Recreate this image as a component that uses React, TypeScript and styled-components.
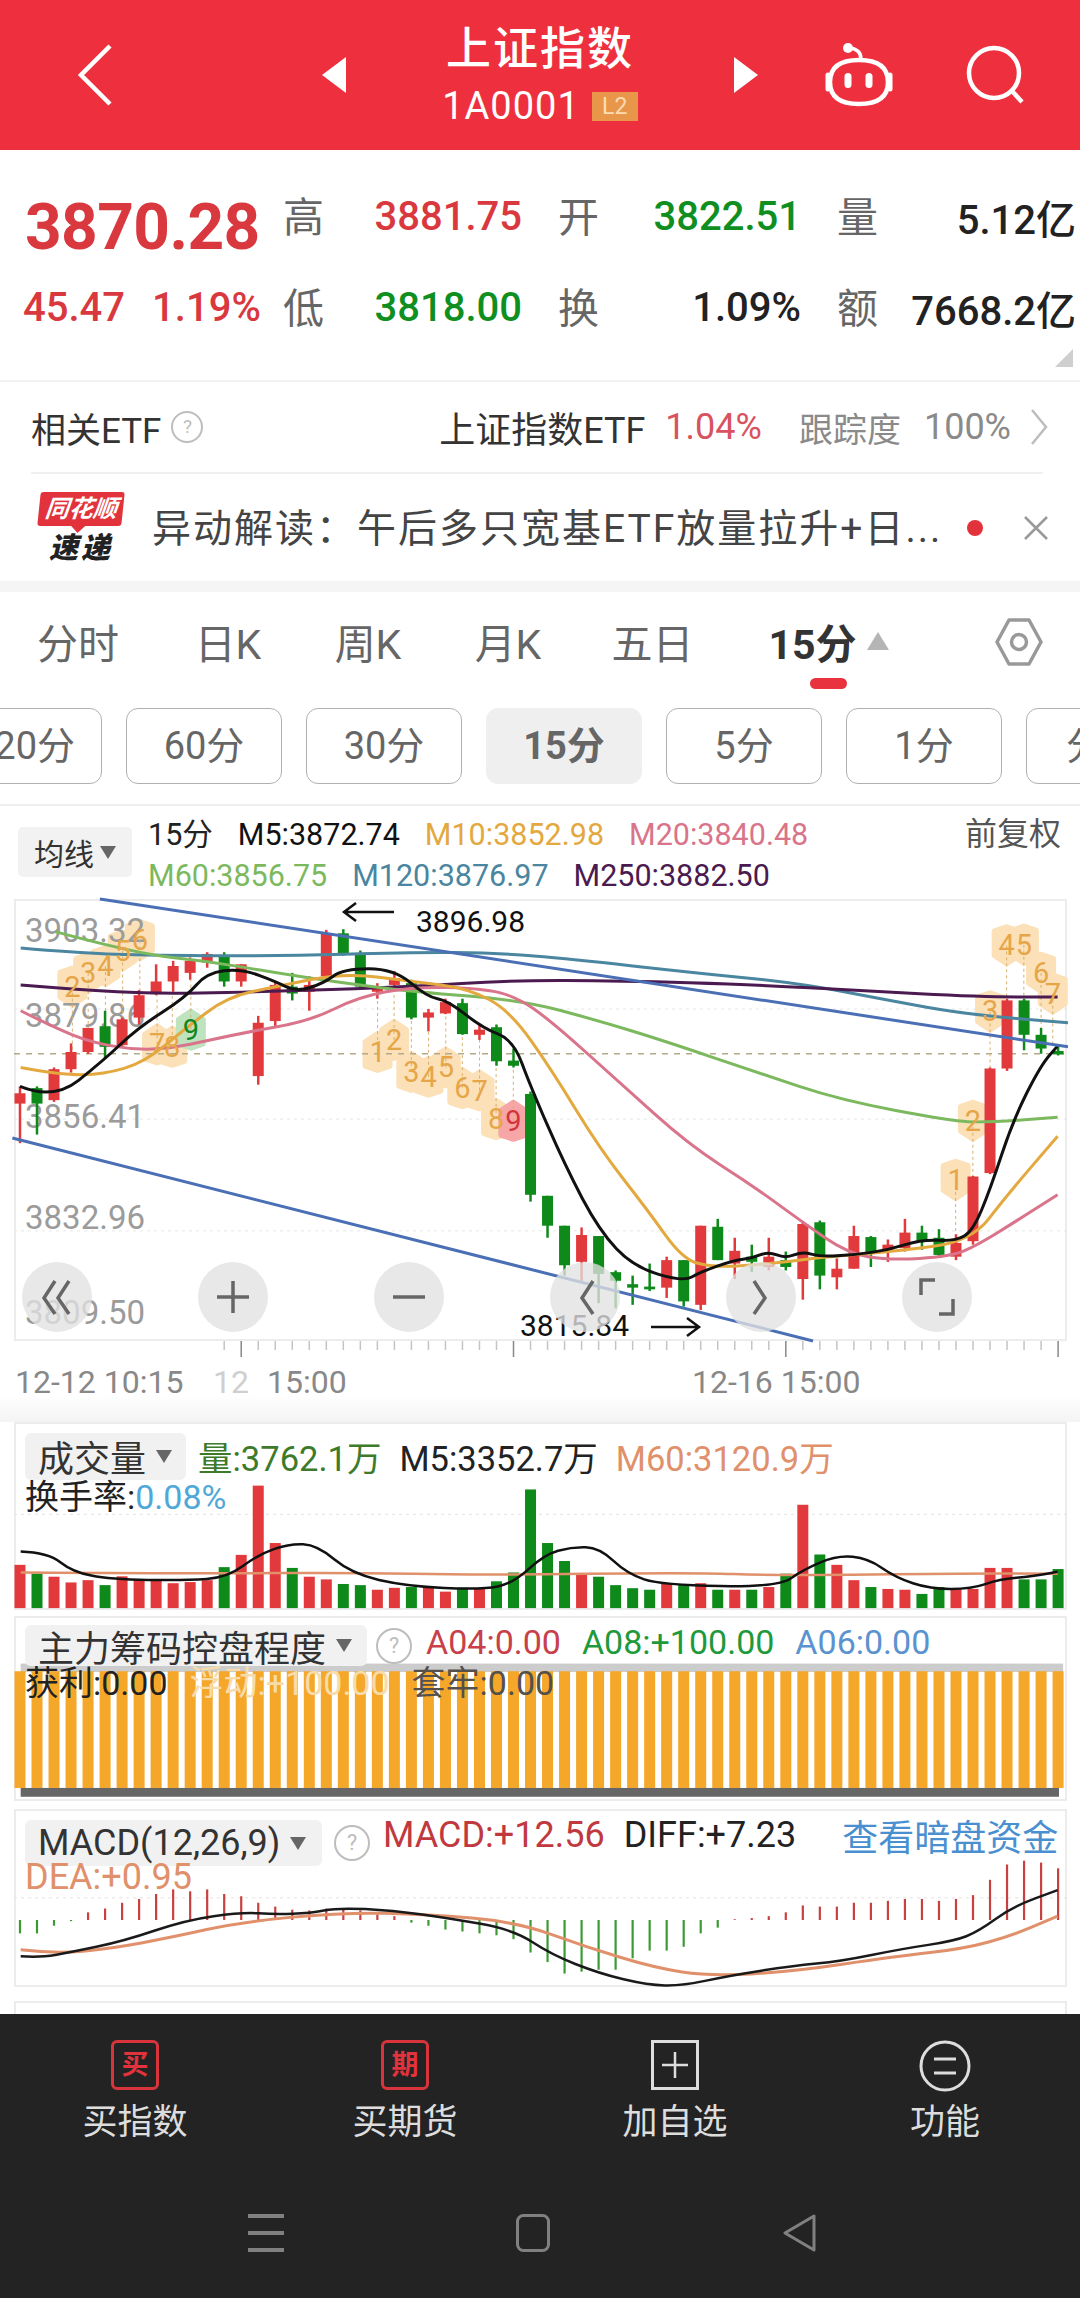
/**
 * Index quote page
 */
import { FC, ReactNode } from 'react';
import styled, { createGlobalStyle } from 'styled-components';

const FONT = `Roboto, "Noto Sans CJK SC", sans-serif`;
const RED = '#d9383e';
const GREEN = '#0f8f1f';
const BAR_RED = '#e23a3c';
const BAR_GREEN = '#0e8a1a';
const AMBER = '#e3a83e';
const PINK = '#d9748a';
const LIME = '#7cb95e';
const TEAL = '#4a86a0';
const PLUM = '#4a1a50';
const LINE_BLUE = '#4a6fb5';
const LINE_ORANGE = '#e0906a';

const GlobalStyle = createGlobalStyle`
  html, body {
    margin: 0;
    padding: 0;
    background: #ffffff;
  }
  body {
    font-family: ${FONT};
  }
`;

const Page = styled.div`
  width: 1080px;
  height: 2298px;
  overflow: hidden;
  background: #ffffff;
`;

/* header */
const Header = styled.header`
  height: 150px;
  background: #ee303e;
  display: grid;
  grid-template-columns: 321px 26px 386px 26px 1fr;
  align-items: center;
  color: #ffffff;
`;

const BackCell = styled.div`
  padding-left: 76px;
  display: flex;
`;

const TitleBlock = styled.div`
  display: flex;
  flex-direction: column;
  align-items: center;
  gap: 10px;
`;

const Title = styled.h1`
  margin: 0;
  font-size: 45px;
  line-height: 52px;
  letter-spacing: 2px;
  font-weight: 500;
`;

const CodeLine = styled.div`
  display: flex;
  align-items: center;
  gap: 12px;
  font-size: 38px;
  line-height: 40px;
  letter-spacing: 1px;
`;

const LevelBadge = styled.span`
  width: 46px;
  height: 29px;
  background: #e8964a;
  color: #fbdcb4;
  font-size: 23px;
  line-height: 29px;
  letter-spacing: 0;
  text-align: center;
`;

const HeaderActions = styled.div`
  display: flex;
  justify-content: flex-end;
  align-items: center;
  gap: 71px;
  padding-right: 53px;
`;

/* quote */
const Quote = styled.section`
  position: relative;
  height: 232px;
  box-sizing: border-box;
  padding-top: 21px;
  border-bottom: 2px solid #f1f1f1;
  display: grid;
  grid-template-columns: 283px 239px 279px 275px;
  grid-auto-rows: 91px;
  &::after {
    content: '';
    position: absolute;
    right: 7px;
    bottom: 13px;
    border-style: solid;
    border-width: 0 0 18px 18px;
    border-color: transparent transparent #cfcfcf transparent;
  }
`;

const MainPrice = styled.div`
  padding: 22px 0 0 25px;
  font-size: 64px;
  font-weight: 700;
  letter-spacing: -0.6px;
  color: ${RED};
  display: flex;
  align-items: center;
`;

const ChangeRow = styled.div`
  padding-left: 23px;
  display: flex;
  gap: 27px;
  align-items: center;
  font-size: 40px;
  font-weight: 500;
  color: ${RED};
`;

const Stat = styled.div<{ $inset?: boolean }>`
  padding-left: ${(p) => (p.$inset ? 36 : 0)}px;
  display: flex;
  justify-content: space-between;
  align-items: center;
`;

const StatLabel = styled.span`
  margin-top: -5px;
  font-size: 41px;
  color: #666666;
`;

const StatValue = styled.span<{ $color: string }>`
  font-size: 40px;
  font-weight: 500;
  color: ${(p) => p.$color};
`;

/* etf row */
const EtfRow = styled.div`
  height: 90px;
  margin: 0 37px 0 31px;
  display: flex;
  align-items: center;
  font-size: 35px;
  color: #333333;
  border-bottom: 2px solid #f0f0f0;
`;

const HelpDot = styled.span<{ $size: number; $gap?: number }>`
  width: ${(p) => p.$size}px;
  height: ${(p) => p.$size}px;
  margin-left: ${(p) => p.$gap ?? 0}px;
  box-sizing: border-box;
  flex: none;
  border: 2px solid #bdbdbd;
  border-radius: 50%;
  color: #bdbdbd;
  font-size: ${(p) => p.$size * 0.6}px;
  line-height: ${(p) => p.$size - 4}px;
  text-align: center;
`;

const EtfName = styled.span`
  margin-left: auto;
  font-size: 36px;
`;

const EtfChange = styled.span`
  margin-left: 20px;
  font-size: 36px;
  color: #d8535f;
`;

const EtfTrack = styled.span`
  margin-left: 37px;
  font-size: 34px;
  color: #8a8a8a;
`;

const EtfTrackValue = styled.span`
  margin-left: 23px;
  font-size: 36px;
  color: #8a8a8a;
`;

const EtfArrow = styled.svg`
  margin-left: 18px;
  margin-right: -6px;
`;

/* news row */
const NewsRow = styled.div`
  height: 107px;
  display: flex;
  align-items: center;
  padding: 0 37px;
`;

const Logo = styled.div`
  width: 88px;
  flex: none;
  display: flex;
  flex-direction: column;
  align-items: center;
`;

const LogoBanner = styled.div`
  position: relative;
  width: 84px;
  height: 34px;
  background: #e2323c;
  border-radius: 3px;
  transform: skewX(-6deg);
  color: #ffffff;
  font-size: 24px;
  line-height: 34px;
  font-weight: 700;
  font-style: italic;
  text-align: center;
  &::after {
    content: '';
    position: absolute;
    left: 34px;
    bottom: -7px;
    border-style: solid;
    border-width: 7px 7px 0 7px;
    border-color: #e2323c transparent transparent transparent;
  }
`;

const LogoLabel = styled.div`
  margin-top: 7px;
  font-size: 29px;
  line-height: 30px;
  letter-spacing: 3px;
  font-weight: 900;
  font-style: italic;
  color: #222222;
`;

const NewsText = styled.div`
  margin: -5px 0 0 27px;
  width: 795px;
  flex: none;
  font-size: 39px;
  letter-spacing: 2px;
  color: #444444;
  white-space: nowrap;
`;

const NewsDot = styled.span`
  margin-left: 20px;
  width: 16px;
  height: 16px;
  flex: none;
  border-radius: 50%;
  background: #e2323c;
`;

const NewsClose = styled.svg`
  margin-left: 40px;
  flex: none;
`;

const Band = styled.div`
  height: 11px;
  background: #f5f5f5;
`;

/* period tabs */
const Tabs = styled.nav`
  height: 100px;
  display: grid;
  grid-template-columns: 156px 144px 136px 144px 145px 180px 1fr;
  align-items: center;
  padding-right: 37px;
`;

const Tab = styled.span<{ $active?: boolean }>`
  position: relative;
  display: flex;
  justify-content: center;
  align-items: center;
  gap: 10px;
  margin-top: -3px;
  font-size: 41px;
  font-weight: ${(p) => (p.$active ? 700 : 400)};
  color: ${(p) => (p.$active ? '#333333' : '#666666')};
  ${(p) =>
    p.$active &&
    `padding-left: 27px;
    &::after {
      content: '';
      position: absolute;
      left: 85px;
      bottom: -18px;
      width: 37px;
      height: 11px;
      border-radius: 6px;
      background: #e8333e;
    }`}
`;

const TabCaret = styled.span`
  border-style: solid;
  border-width: 0 11px 18px 11px;
  border-color: transparent transparent #b5b5b5 transparent;
`;

const TabSettings = styled.svg`
  justify-self: end;
`;

const Periods = styled.div`
  height: 112px;
  box-sizing: border-box;
  padding-top: 16px;
  margin-left: -54px;
  width: 1300px;
  display: flex;
  gap: 24px;
  align-items: flex-start;
`;

const PeriodButton = styled.span<{ $active?: boolean }>`
  width: 156px;
  height: 76px;
  box-sizing: border-box;
  flex: none;
  border: 1px solid ${(p) => (p.$active ? '#efefef' : '#b0b0b0')};
  border-radius: 12px;
  background: ${(p) => (p.$active ? '#efefef' : '#ffffff')};
  font-size: 38px;
  line-height: 74px;
  font-weight: ${(p) => (p.$active ? 700 : 400)};
  color: #666666;
  text-align: center;
`;

/* main chart legend */
const Legend = styled.div`
  height: 95px;
  box-sizing: border-box;
  border-top: 2px solid #efefef;
  display: flex;
  padding: 8px 19px 0 18px;
`;

const SelectBox = styled.div`
  margin-top: 13px;
  width: 114px;
  height: 50px;
  flex: none;
  border-radius: 5px;
  background: #f2f2f2;
  display: flex;
  align-items: center;
  justify-content: center;
  gap: 6px;
  font-size: 30px;
  color: #333333;
`;

const Caret = styled.span`
  border-style: solid;
  border-width: 13px 8px 0 8px;
  border-color: #666666 transparent transparent transparent;
`;

const LegendLines = styled.div`
  margin-left: 16px;
  display: flex;
  flex-direction: column;
`;

const LegendLine = styled.div`
  display: flex;
  gap: 25px;
  font-size: 30.5px;
  line-height: 41px;
  white-space: nowrap;
`;

const Reading = styled.span<{ $color: string }>`
  color: ${(p) => p.$color};
`;

const ReadingLink = styled(Reading)`
  margin-left: 27px;
`;

const Adjust = styled.span`
  margin-left: auto;
  font-size: 32px;
  line-height: 41px;
  color: #555555;
`;

/* panels */
const Panel = styled.div<{ $h: number; $gap?: number; $open?: boolean }>`
  position: relative;
  height: ${(p) => p.$h}px;
  box-sizing: border-box;
  margin: ${(p) => p.$gap ?? 0}px 13px 0 14px;
  border: 2px solid #ececec;
  ${(p) => p.$open && 'border-bottom: 0;'}
`;

const PanelChart = styled.svg`
  position: absolute;
  left: -2px;
  top: -2px;
  overflow: visible;
`;

const PriceTick = styled.text`
  font-family: ${FONT};
  font-size: 33px;
  fill: #9b9b9b;
`;

const ExtremeTick = styled.text`
  font-family: ${FONT};
  font-size: 30px;
  fill: #111111;
`;

const MarkDigit = styled.text<{ $color: string }>`
  font-family: ${FONT};
  font-size: 29px;
  fill: ${(p) => p.$color};
  text-anchor: middle;
`;

const Controls = styled.div`
  position: absolute;
  left: 6px;
  top: 361px;
  display: flex;
  gap: 106px;
`;

const ControlButton = styled.svg`
  width: 70px;
  height: 70px;
  border-radius: 50%;
  background: rgba(225, 225, 225, 0.78);
`;

const AxisTicks = styled.svg`
  display: block;
  margin-left: 14px;
  overflow: visible;
`;

const AxisLabels = styled.div`
  height: 61px;
  box-sizing: border-box;
  padding-left: 15px;
  display: grid;
  grid-template-columns: 198px 479px 1fr;
  font-size: 32px;
  line-height: 42px;
  color: #888888;
  background: linear-gradient(#ffffff 55%, #f4f4f4 100%);
`;

const FadedDigits = styled.span`
  color: #cfcfcf;
  margin-right: 18px;
`;

const PanelHead = styled.div<{ $top: number }>`
  position: absolute;
  left: 9px;
  top: ${(p) => p.$top}px;
  display: flex;
  align-items: center;
  white-space: nowrap;
  font-size: 34px;
`;

const PanelSelect = styled.div<{ $w: number; $h: number }>`
  width: ${(p) => p.$w}px;
  height: ${(p) => p.$h}px;
  box-sizing: border-box;
  padding-left: 13px;
  flex: none;
  border-radius: 6px;
  background: #f1f1f1;
  display: flex;
  align-items: center;
  gap: 10px;
  font-size: 36px;
  color: #333333;
`;

const HeadReadings = styled.div<{ $left: number; $gap: number; $up?: number; $size?: number }>`
  margin-left: ${(p) => p.$left}px;
  margin-top: ${(p) => -(p.$up ?? 0)}px;
  display: flex;
  align-items: center;
  gap: ${(p) => p.$gap}px;
  font-size: ${(p) => p.$size ?? 34}px;
`;

const SubLine = styled.div<{ $top: number; $gap?: number; $size?: number }>`
  position: absolute;
  left: 9px;
  top: ${(p) => p.$top}px;
  display: flex;
  gap: ${(p) => p.$gap ?? 0}px;
  white-space: nowrap;
  font-size: ${(p) => p.$size ?? 34}px;
  line-height: 40px;
`;

/* footer */
const Footer = styled.footer`
  position: relative;
  height: 285px;
  background: #232323;
`;

const ActionBar = styled.div`
  height: 168px;
  box-sizing: border-box;
  padding-top: 26px;
  display: grid;
  grid-template-columns: repeat(4, 270px);
`;

const Action = styled.div`
  display: flex;
  flex-direction: column;
  align-items: center;
  font-size: 35px;
  line-height: 46px;
  color: #dddddd;
`;

const ActionIcon = styled.div`
  height: 50px;
  margin-bottom: 10px;
`;

const TradeStamp = styled.div`
  width: 48px;
  height: 50px;
  box-sizing: border-box;
  border: 3px solid #d8343c;
  border-radius: 6px;
  color: #e2323c;
  font-size: 27px;
  line-height: 44px;
  font-weight: 700;
  text-align: center;
`;

const SystemBar = styled.div`
  display: flex;
  justify-content: center;
  align-items: center;
  height: 102px;
  gap: 232px;
  padding-right: 15px;
`;

/* scale helpers, source points were read off a 1568 wide grid */
const px = (z: number) => z * 0.689 - 14;
const priceY = (z: number) => z * 0.344 - 19;
const volumeY = (z: number) => z * 0.3827 - 11;
const chipY = (z: number) => z * 0.3827 - 205;
const macdY = (z: number) => z * 0.3827 - 398;

const slotX = (i: number) => 29 + i * 24.7;

const smooth = (pts: number[][], y: (z: number) => number) => {
  const p = pts.map(([a, b]) => [px(a), y(b)]);
  let d = `M${p[0][0]} ${p[0][1]}`;
  for (let i = 1; i < p.length - 1; i++) {
    const mx = (p[i][0] + p[i + 1][0]) / 2;
    const my = (p[i][1] + p[i + 1][1]) / 2;
    d += ` Q${p[i][0]} ${p[i][1]} ${mx} ${my}`;
  }
  const last = p[p.length - 1];
  return `${d} L${last[0]} ${last[1]}`;
};

// up, wick top, body top, body bottom, wick bottom
const CANDLES: [number, number, number, number, number][] = [
  [1, 600, 620, 650, 765], [0, 600, 605, 650, 740], [1, 545, 550, 640, 645], [1, 475, 500, 550, 560],
  [1, 430, 430, 500, 505], [0, 380, 425, 485, 520], [1, 400, 405, 480, 485], [1, 320, 335, 400, 420],
  [1, 245, 295, 332, 335], [1, 235, 250, 295, 325], [1, 225, 235, 270, 290], [1, 210, 215, 240, 255],
  [0, 210, 222, 295, 310], [1, 245, 245, 295, 310], [1, 395, 415, 570, 595], [1, 295, 305, 410, 430],
  [0, 270, 310, 330, 350], [1, 280, 305, 325, 380], [1, 145, 155, 280, 290], [0, 143, 155, 215, 220],
  [0, 205, 215, 310, 315], [1, 300, 310, 325, 345], [1, 265, 285, 305, 310], [0, 290, 300, 400, 405],
  [1, 375, 385, 400, 440], [1, 345, 355, 388, 390], [0, 345, 358, 448, 450], [1, 420, 435, 450, 465],
  [0, 420, 428, 527, 540], [0, 490, 525, 540, 545], [0, 615, 622, 915, 935], [0, 918, 918, 1005, 1040],
  [0, 1005, 1005, 1120, 1150], [1, 1010, 1032, 1110, 1165], [0, 1035, 1035, 1145, 1230], [0, 1135, 1140, 1165, 1245],
  [0, 1150, 1175, 1185, 1235], [0, 1115, 1182, 1190, 1195], [1, 1095, 1105, 1185, 1215], [0, 1105, 1105, 1225, 1240],
  [1, 1005, 1005, 1235, 1250], [0, 985, 1008, 1105, 1105], [1, 1040, 1078, 1115, 1160], [0, 1060, 1095, 1110, 1140],
  [1, 1040, 1095, 1125, 1135], [0, 1080, 1105, 1125, 1135], [1, 995, 1000, 1160, 1220], [0, 990, 995, 1150, 1190],
  [1, 1100, 1130, 1155, 1190], [1, 1005, 1035, 1130, 1130], [0, 1035, 1038, 1085, 1125], [1, 1045, 1060, 1080, 1110],
  [1, 985, 1025, 1070, 1080], [0, 1005, 1025, 1050, 1075], [0, 1015, 1040, 1090, 1095], [1, 1030, 1055, 1095, 1105],
  [1, 860, 862, 1050, 1060], [1, 545, 548, 852, 855], [1, 345, 350, 548, 555], [0, 345, 350, 450, 495],
  [0, 430, 450, 490, 505], [0, 480, 497, 507, 510],
];

const PRICE_LINES: { color: string; pts: number[][] }[] = [
  { color: TEAL, pts: [[30, 198], [110, 212], [200, 218], [400, 222], [600, 210], [720, 212], [830, 230], [1000, 268], [1160, 300], [1290, 350], [1400, 390], [1550, 415]] },
  { color: PLUM, pts: [[30, 305], [110, 318], [230, 332], [430, 322], [600, 310], [740, 292], [900, 293], [1100, 305], [1250, 322], [1420, 340], [1535, 340]] },
  { color: LIME, pts: [[80, 150], [200, 215], [300, 235], [400, 270], [500, 300], [600, 325], [760, 350], [870, 410], [960, 465], [1100, 560], [1220, 640], [1380, 700], [1430, 705], [1535, 690]] },
  { color: PINK, pts: [[30, 380], [80, 430], [130, 470], [190, 493], [250, 490], [350, 445], [450, 410], [520, 340], [600, 310], [700, 315], [750, 340], [800, 410], [900, 590], [1000, 770], [1090, 885], [1165, 995], [1230, 1085], [1290, 1105], [1380, 1095], [1420, 1060], [1480, 985], [1535, 915]] },
  { color: AMBER, pts: [[30, 545], [90, 567], [150, 565], [210, 530], [270, 430], [330, 340], [400, 310], [500, 270], [600, 295], [680, 315], [740, 380], [800, 550], [870, 780], [940, 960], [990, 1100], [1030, 1125], [1100, 1120], [1200, 1095], [1300, 1080], [1410, 1050], [1460, 920], [1535, 745]] },
  { color: '#111111', pts: [[29, 600], [78, 640], [150, 525], [200, 430], [270, 340], [300, 270], [350, 258], [400, 295], [430, 325], [470, 300], [498, 258], [572, 258], [620, 340], [650, 350], [700, 430], [745, 465], [770, 600], [820, 830], [870, 1020], [920, 1125], [992, 1168], [1016, 1140], [1066, 1105], [1091, 1100], [1115, 1080], [1140, 1100], [1165, 1080], [1190, 1095], [1240, 1090], [1290, 1075], [1338, 1045], [1387, 1050], [1412, 1020], [1437, 900], [1470, 700], [1510, 540], [1536, 480]] },
];

// digit, x, y, where its dashed stem ends, tone
const MARKS: [string, number, number, number, string?][] = [
  ['2', 105, 310, 500], ['3', 128, 270, 430], ['4', 153, 250, 380], ['5', 178, 205, 400], ['6', 203, 175, 320],
  ['7', 228, 478, 335], ['8', 250, 485, 325], ['9', 277, 435, 290, 'green'],
  ['1', 548, 500, 345], ['2', 572, 465, 310], ['3', 597, 558, 405], ['4', 622, 572, 440], ['5', 647, 545, 390],
  ['6', 671, 605, 450], ['7', 696, 612, 465], ['8', 720, 695, 540], ['9', 745, 700, 545, 'red'],
  ['1', 1387, 872, 1050], ['2', 1412, 700, 860], ['3', 1437, 382, 545], ['4', 1461, 190, 345], ['5', 1486, 188, 345],
  ['6', 1511, 270, 430], ['7', 1528, 330, 480],
];

const MARK_TONES: Record<string, { fill: string; digit: string }> = {
  amber: { fill: '#fbe0b8', digit: '#e6a648' },
  green: { fill: '#bfe3bf', digit: '#12871f' },
  red: { fill: '#f6a6a6', digit: '#d4343c' },
};

// five sided tag whose tip points at its candle
const markShape = (x: number, y: number, tipUp: boolean) => {
  const tip = tipUp ? -1 : 1;
  return `M${x - 12} ${y - 14 * tip} L${x} ${y - 18 * tip} L${x + 12} ${y - 14 * tip} V${y + 10 * tip} L${x} ${y + 18 * tip} L${x - 12} ${y + 10 * tip} Z`;
};

const VOLUME: [number, number][] = [
  [1, 402], [0, 425], [1, 433], [1, 448], [1, 442], [0, 455], [1, 432], [1, 440], [1, 440], [1, 450], [1, 447],
  [1, 442], [0, 408], [1, 376], [1, 195], [1, 345], [0, 410], [1, 433], [1, 440], [0, 452], [0, 455], [1, 467],
  [1, 462], [0, 460], [1, 462], [1, 472], [0, 462], [1, 465], [0, 445], [0, 422], [0, 205], [0, 345], [0, 392],
  [1, 427], [0, 433], [0, 455], [0, 463], [0, 467], [1, 452], [0, 452], [1, 450], [0, 467], [1, 467], [0, 467],
  [1, 460], [0, 425], [1, 245], [0, 375], [1, 402], [1, 442], [0, 460], [1, 465], [1, 467], [0, 478], [0, 460],
  [1, 463], [1, 465], [1, 410], [1, 410], [0, 440], [0, 440], [0, 413],
];

const VOLUME_AVG = [[30, 367], [70, 370], [105, 420], [160, 440], [270, 443], [330, 435], [375, 375], [420, 347], [460, 350], [510, 425], [590, 458], [700, 467], [745, 450], [790, 375], [830, 355], [870, 357], [910, 425], [960, 455], [1130, 460], [1165, 415], [1215, 377], [1260, 385], [1300, 435], [1350, 465], [1410, 465], [1450, 440], [1500, 432], [1535, 420]];
const VOLUME_LONG = [[30, 422], [300, 425], [500, 422], [700, 429], [1000, 422], [1130, 430], [1400, 424], [1535, 425]];

// end of each histogram stem, the zero line sits at 1330
const MACD_BARS = [1365, 1365, 1345, 1333, 1310, 1300, 1285, 1275, 1262, 1250, 1255, 1250, 1262, 1268, 1285, 1295, 1303, 1305, 1300, 1300, 1305, 1315, 1320, 1337, 1345, 1355, 1360, 1365, 1370, 1380, 1415, 1440, 1470, 1465, 1460, 1460, 1430, 1410, 1410, 1400, 1365, 1350, 1328, 1325, 1320, 1310, 1292, 1295, 1295, 1285, 1285, 1280, 1275, 1275, 1280, 1275, 1265, 1225, 1185, 1175, 1180, 1195];
const DIFF = [[30, 1425], [60, 1428], [100, 1415], [180, 1385], [270, 1330], [350, 1310], [400, 1315], [450, 1312], [490, 1298], [570, 1305], [650, 1325], [745, 1355], [800, 1420], [870, 1470], [940, 1500], [990, 1502], [1060, 1475], [1150, 1450], [1220, 1438], [1310, 1405], [1385, 1385], [1420, 1360], [1470, 1295], [1535, 1252]];
const DEA = [[30, 1408], [80, 1418], [160, 1405], [250, 1375], [350, 1335], [500, 1310], [620, 1315], [750, 1335], [850, 1400], [950, 1455], [1030, 1477], [1150, 1465], [1300, 1425], [1400, 1405], [1470, 1370], [1535, 1320]];

const BAR_W = 11;

const PriceChart: FC = () => (
  <PanelChart width={1053} height={442}>
    <line x1={0} x2={1053} y1={priceY(375)} y2={priceY(375)} stroke="#e6e6e6" strokeDasharray="3 4" />
    <line x1={0} x2={1053} y1={priceY(695)} y2={priceY(695)} stroke="#e6e6e6" strokeDasharray="3 4" />
    <line x1={0} x2={1053} y1={priceY(1020)} y2={priceY(1020)} stroke="#e6e6e6" strokeDasharray="3 4" />
    {MARKS.map(([, x, y, end, tone], i) => (
      <path
        key={`t${i}`}
        d={markShape(px(x), priceY(y), end < y)}
        fill={MARK_TONES[tone ?? 'amber'].fill}
        stroke={MARK_TONES[tone ?? 'amber'].fill}
        strokeWidth={6}
        strokeLinejoin="round"
      />
    ))}
    <PriceTick x={11} y={priceY(145) + 12}>3903.32</PriceTick>
    <PriceTick x={11} y={priceY(392) + 12}>3879.86</PriceTick>
    <PriceTick x={11} y={priceY(685) + 12}>3856.41</PriceTick>
    <PriceTick x={11} y={priceY(980) + 12}>3832.96</PriceTick>
    <PriceTick x={11} y={priceY(1255) + 12}>3809.50</PriceTick>
    <line x1={0} x2={1053} y1={priceY(505)} y2={priceY(505)} stroke="#b5aa88" strokeWidth={1.5} strokeDasharray="6 6" />
    {MARKS.map(([d, x, y, end], i) => (
      <line key={`${d}${i}`} x1={px(x)} x2={px(x)} y1={priceY(y)} y2={priceY(end)} stroke="#d8b070" strokeWidth={1} strokeDasharray="3 3" />
    ))}
    {CANDLES.map(([up, wt, bt, bb, wb], i) => {
      const x = px(slotX(i));
      const color = up ? BAR_RED : BAR_GREEN;
      return (
        <g key={i}>
          <line x1={x} x2={x} y1={priceY(wt)} y2={priceY(wb)} stroke={color} strokeWidth={2.5} />
          <rect x={x - BAR_W / 2} y={priceY(bt)} width={BAR_W} height={(bb - bt) * 0.344} fill={color} />
        </g>
      );
    })}
    {PRICE_LINES.map((l) => (
      <path key={l.color} d={smooth(l.pts, priceY)} fill="none" stroke={l.color} strokeWidth={3} strokeLinejoin="round" />
    ))}
    <line x1={px(145)} y1={priceY(55)} x2={px(1550)} y2={priceY(485)} stroke={LINE_BLUE} strokeWidth={3} />
    <line x1={px(18)} y1={priceY(750)} x2={px(1180)} y2={priceY(1340)} stroke={LINE_BLUE} strokeWidth={3} />
    {MARKS.map(([d, x, y, , tone], i) => (
      <MarkDigit key={`m${i}`} x={px(x)} y={priceY(y) + 10} $color={MARK_TONES[tone ?? 'amber'].digit}>{d}</MarkDigit>
    ))}
    <path d="M330 13 H380 M342 4 L330 13 L342 22" fill="none" stroke="#111" strokeWidth={2.5} />
    <ExtremeTick x={402} y={33}>3896.98</ExtremeTick>
    <ExtremeTick x={506} y={437}>3815.84</ExtremeTick>
    <path d="M637 428 H685 M673 419 L685 428 L673 437" fill="none" stroke="#111" strokeWidth={2.5} />
  </PanelChart>
);

const CONTROL_GLYPHS: ReactNode[] = [
  <path key="back" d="M33 19 L22 36 L33 52 M47 19 L36 36 L47 52" />,
  <path key="in" d="M19 35 H51 M35 19 V51" />,
  <path key="out" d="M19 35 H51" />,
  <path key="prev" d="M43 19 L32 36 L43 52" />,
  <path key="next" d="M28 19 L39 36 L28 52" />,
  <path key="full" d="M33 18 H19 V33 M37 52 H51 V37" />,
];

const VolumeChart: FC = () => (
  <PanelChart width={1053} height={188}>
    <line x1={0} x2={1053} y1={volumeY(270)} y2={volumeY(270)} stroke="#e2e2e2" strokeDasharray="3 4" />
    {VOLUME.map(([up, top], i) => (
      <rect key={i} x={px(slotX(i)) - BAR_W / 2} y={volumeY(top)} width={BAR_W} height={(515 - top) * 0.3827} fill={up ? BAR_RED : BAR_GREEN} />
    ))}
    <path d={smooth(VOLUME_LONG, volumeY)} fill="none" stroke={LINE_ORANGE} strokeWidth={2.5} />
    <path d={smooth(VOLUME_AVG, volumeY)} fill="none" stroke="#111" strokeWidth={2.5} />
  </PanelChart>
);

const ChipChart: FC = () => (
  <PanelChart width={1053} height={185}>
    <rect x={px(30)} y={chipY(660)} width={px(1543) - px(30)} height={chipY(682) - chipY(660)} fill="#cccccc" />
    {CANDLES.map((_, i) => (
      <rect key={i} x={px(slotX(i)) - BAR_W / 2} y={chipY(680)} width={BAR_W} height={chipY(985) - chipY(680)} fill="#f5a72a" />
    ))}
    <rect x={px(30)} y={chipY(985)} width={px(1537) - px(30)} height={chipY(1008) - chipY(985)} fill="#666666" />
  </PanelChart>
);

const MacdChart: FC = () => (
  <PanelChart width={1053} height={178}>
    <line x1={0} x2={1053} y1={macdY(1272)} y2={macdY(1272)} stroke="#e2e2e2" strokeDasharray="3 4" />
    {MACD_BARS.map((end, i) => {
      const x = px(slotX(i));
      return (
        <line key={i} x1={x} x2={x} y1={macdY(1330)} y2={macdY(end)} stroke={end < 1330 ? '#c8403f' : '#3c9a34'} strokeWidth={2.2} />
      );
    })}
    <path d={smooth(DEA, macdY)} fill="none" stroke={LINE_ORANGE} strokeWidth={3} />
    <path d={smooth(DIFF, macdY)} fill="none" stroke="#1a1a1a" strokeWidth={2.5} />
  </PanelChart>
);

const App: FC = () => (
  <Page>
    <GlobalStyle />
    <Header>
      <BackCell>
        <svg width="38" height="64" viewBox="0 0 38 64">
          <path d="M34 3 L5 32 L34 61" fill="none" stroke="#fff" strokeWidth="4.5" />
        </svg>
      </BackCell>
      <svg width="26" height="36" viewBox="0 0 26 36"><path d="M25 0 V36 L1 18 Z" fill="#fff" /></svg>
      <TitleBlock>
        <Title>上证指数</Title>
        <CodeLine>
          1A0001
          <LevelBadge>L2</LevelBadge>
        </CodeLine>
      </TitleBlock>
      <svg width="26" height="36" viewBox="0 0 26 36"><path d="M1 0 V36 L25 18 Z" fill="#fff" /></svg>
      <HeaderActions>
        <svg width="70" height="66" viewBox="0 0 70 66">
          <path d="M35 18 C17 18 6 24 6 40 C6 56 17 62 35 62 C53 62 64 56 64 40 C64 24 53 18 35 18 Z" fill="none" stroke="#fff" strokeWidth="4.5" />
          <path d="M4 33 V47 M66 33 V47" fill="none" stroke="#fff" strokeWidth="5" strokeLinecap="round" />
          <path d="M37 17 C37 10 33 7 26 6" fill="none" stroke="#fff" strokeWidth="3.5" />
          <circle cx="24" cy="6" r="5" fill="#fff" />
          <rect x="20.5" y="31" width="7" height="15" rx="3.5" fill="#fff" />
          <rect x="41.5" y="31" width="7" height="15" rx="3.5" fill="#fff" />
        </svg>
        <svg width="62" height="60" viewBox="0 0 62 60">
          <circle cx="29" cy="28" r="25" fill="none" stroke="#fff" strokeWidth="4.5" />
          <path d="M47 46 L57 57" fill="none" stroke="#fff" strokeWidth="4.5" />
        </svg>
      </HeaderActions>
    </Header>

    <Quote>
      <MainPrice>3870.28</MainPrice>
      <Stat>
        <StatLabel>高</StatLabel>
        <StatValue $color={RED}>3881.75</StatValue>
      </Stat>
      <Stat $inset>
        <StatLabel>开</StatLabel>
        <StatValue $color={GREEN}>3822.51</StatValue>
      </Stat>
      <Stat $inset>
        <StatLabel>量</StatLabel>
        <StatValue $color="#222222">5.12亿</StatValue>
      </Stat>
      <ChangeRow>
        <span>45.47</span>
        <span>1.19%</span>
      </ChangeRow>
      <Stat>
        <StatLabel>低</StatLabel>
        <StatValue $color={GREEN}>3818.00</StatValue>
      </Stat>
      <Stat $inset>
        <StatLabel>换</StatLabel>
        <StatValue $color="#222222">1.09%</StatValue>
      </Stat>
      <Stat $inset>
        <StatLabel>额</StatLabel>
        <StatValue $color="#222222">7668.2亿</StatValue>
      </Stat>
    </Quote>

    <EtfRow>
      相关ETF
      <HelpDot $size={32} $gap={10}>?</HelpDot>
      <EtfName>上证指数ETF</EtfName>
      <EtfChange>1.04%</EtfChange>
      <EtfTrack>跟踪度</EtfTrack>
      <EtfTrackValue>100%</EtfTrackValue>
      <EtfArrow width="20" height="38" viewBox="0 0 20 38">
        <path d="M3 2 L17 19 L3 36" fill="none" stroke="#bdbdbd" strokeWidth="2.5" />
      </EtfArrow>
    </EtfRow>

    <NewsRow>
      <Logo>
        <LogoBanner>同花顺</LogoBanner>
        <LogoLabel>速递</LogoLabel>
      </Logo>
      <NewsText>异动解读：午后多只宽基ETF放量拉升+日...</NewsText>
      <NewsDot />
      <NewsClose width="26" height="26" viewBox="0 0 26 26">
        <path d="M2 2 L24 24 M24 2 L2 24" stroke="#999" strokeWidth="2.5" />
      </NewsClose>
    </NewsRow>
    <Band />

    <Tabs>
      <Tab>分时</Tab>
      <Tab>日K</Tab>
      <Tab>周K</Tab>
      <Tab>月K</Tab>
      <Tab>五日</Tab>
      <Tab $active>
        15分
        <TabCaret />
      </Tab>
      <TabSettings width="48" height="50" viewBox="0 0 48 50">
        <path d="M14 3 H34 L46 25 L34 47 H14 L2 25 Z" fill="none" stroke="#999" strokeWidth="3.5" strokeLinejoin="round" />
        <circle cx="24" cy="25" r="7.5" fill="none" stroke="#999" strokeWidth="3.5" />
      </TabSettings>
    </Tabs>

    <Periods>
      <PeriodButton>120分</PeriodButton>
      <PeriodButton>60分</PeriodButton>
      <PeriodButton>30分</PeriodButton>
      <PeriodButton $active>15分</PeriodButton>
      <PeriodButton>5分</PeriodButton>
      <PeriodButton>1分</PeriodButton>
      <PeriodButton>分笔</PeriodButton>
    </Periods>

    <Legend>
      <SelectBox>
        均线
        <Caret />
      </SelectBox>
      <LegendLines>
        <LegendLine>
          <Reading $color="#222222">15分</Reading>
          <Reading $color="#111111">M5:3872.74</Reading>
          <Reading $color={AMBER}>M10:3852.98</Reading>
          <Reading $color={PINK}>M20:3840.48</Reading>
        </LegendLine>
        <LegendLine>
          <Reading $color={LIME}>M60:3856.75</Reading>
          <Reading $color={TEAL}>M120:3876.97</Reading>
          <Reading $color={PLUM}>M250:3882.50</Reading>
        </LegendLine>
      </LegendLines>
      <Adjust>前复权</Adjust>
    </Legend>

    <Panel $h={442}>
      <PriceChart />
      <Controls>
        {CONTROL_GLYPHS.map((glyph, i) => (
          <ControlButton key={i} viewBox="0 0 70 70" fill="none" stroke="#666" strokeWidth="3.5">
            {glyph}
          </ControlButton>
        ))}
      </Controls>
    </Panel>
    <AxisTicks width={1053} height={20}>
      {CANDLES.map((_, i) =>
        i > 11 ? (
          <line key={i} x1={px(slotX(i))} x2={px(slotX(i))} y1={0} y2={(i - 13) % 16 === 0 ? 16 : 9} stroke={(i - 13) % 16 === 0 ? '#888' : '#c4c4c4'} strokeWidth={1.5} />
        ) : null,
      )}
    </AxisTicks>
    <AxisLabels>
      <span>12-12 10:15</span>
      <span>
        <FadedDigits>12</FadedDigits>15:00
      </span>
      <span>12-16 15:00</span>
    </AxisLabels>

    <Panel $h={188}>
      <VolumeChart />
      <PanelHead $top={7}>
        <PanelSelect $w={161} $h={47}>
          成交量
          <Caret />
        </PanelSelect>
        <HeadReadings $left={12} $gap={18} $size={34.5}>
          <Reading $color="#3d7a2a">量:3762.1万</Reading>
          <Reading $color="#222222">M5:3352.7万</Reading>
          <Reading $color={LINE_ORANGE}>M60:3120.9万</Reading>
        </HeadReadings>
      </PanelHead>
      <SubLine $top={53}>
        <Reading $color="#222222">换手率:</Reading>
        <Reading $color="#4fa8d8">0.08%</Reading>
      </SubLine>
    </Panel>

    <Panel $h={185} $gap={6}>
      <ChipChart />
      <PanelHead $top={7}>
        <PanelSelect $w={342} $h={41}>
          主力筹码控盘程度
          <Caret />
        </PanelSelect>
        <HelpDot $size={36} $gap={9}>?</HelpDot>
        <HeadReadings $left={14} $gap={21} $up={8} $size={34}>
          <Reading $color="#c8404a">A04:0.00</Reading>
          <Reading $color="#1e9a3c">A08:+100.00</Reading>
          <Reading $color="#5a93d0">A06:0.00</Reading>
        </HeadReadings>
      </PanelHead>
      <SubLine $top={45} $gap={22}>
        <Reading $color="#222222">获利:0.00</Reading>
        <Reading $color="#f7dcab">浮动:+100.00</Reading>
        <Reading $color="#55504a">套牢:0.00</Reading>
      </SubLine>
    </Panel>

    <Panel $h={178} $gap={8}>
      <MacdChart />
      <PanelHead $top={9}>
        <PanelSelect $w={297} $h={46}>
          MACD(12,26,9)
          <Caret />
        </PanelSelect>
        <HelpDot $size={36} $gap={12}>?</HelpDot>
        <HeadReadings $left={13} $gap={19} $up={16} $size={36}>
          <Reading $color="#c0393f">MACD:+12.56</Reading>
          <Reading $color="#222222">DIFF:+7.23</Reading>
          <ReadingLink $color="#4a8fd0">查看暗盘资金</ReadingLink>
        </HeadReadings>
      </PanelHead>
      <SubLine $top={46} $size={36}>
        <Reading $color={LINE_ORANGE}>DEA:+0.95</Reading>
      </SubLine>
    </Panel>

    <Panel $h={13} $gap={14} $open />

    <Footer>
      <ActionBar>
        <Action>
          <ActionIcon><TradeStamp>买</TradeStamp></ActionIcon>
          买指数
        </Action>
        <Action>
          <ActionIcon><TradeStamp>期</TradeStamp></ActionIcon>
          买期货
        </Action>
        <Action>
          <ActionIcon>
            <svg width="48" height="50" viewBox="0 0 48 50">
              <rect x="1.5" y="1.5" width="45" height="47" fill="none" stroke="#ddd" strokeWidth="3" />
              <path d="M11 25 H37 M24 12 V38" stroke="#ddd" strokeWidth="2.5" />
            </svg>
          </ActionIcon>
          加自选
        </Action>
        <Action>
          <ActionIcon>
            <svg width="52" height="52" viewBox="0 0 52 52">
              <circle cx="26" cy="26" r="24" fill="none" stroke="#ddd" strokeWidth="3" />
              <path d="M15 19 H37 M15 33 H37" stroke="#ddd" strokeWidth="3" />
            </svg>
          </ActionIcon>
          功能
        </Action>
      </ActionBar>
      <SystemBar>
        <svg width="36" height="38" viewBox="0 0 36 38">
          <path d="M0 2 H36 M0 19 H36 M0 36 H36" stroke="#808080" strokeWidth="4" />
        </svg>
        <svg width="34" height="38" viewBox="0 0 34 38">
          <rect x="1.5" y="1.5" width="31" height="35" rx="6" fill="none" stroke="#808080" strokeWidth="3" />
        </svg>
        <svg width="35" height="38" viewBox="0 0 35 38">
          <path d="M32 2 V36 L3 19 Z" fill="none" stroke="#808080" strokeWidth="3" strokeLinejoin="round" />
        </svg>
      </SystemBar>
    </Footer>
  </Page>
);

export default App;
